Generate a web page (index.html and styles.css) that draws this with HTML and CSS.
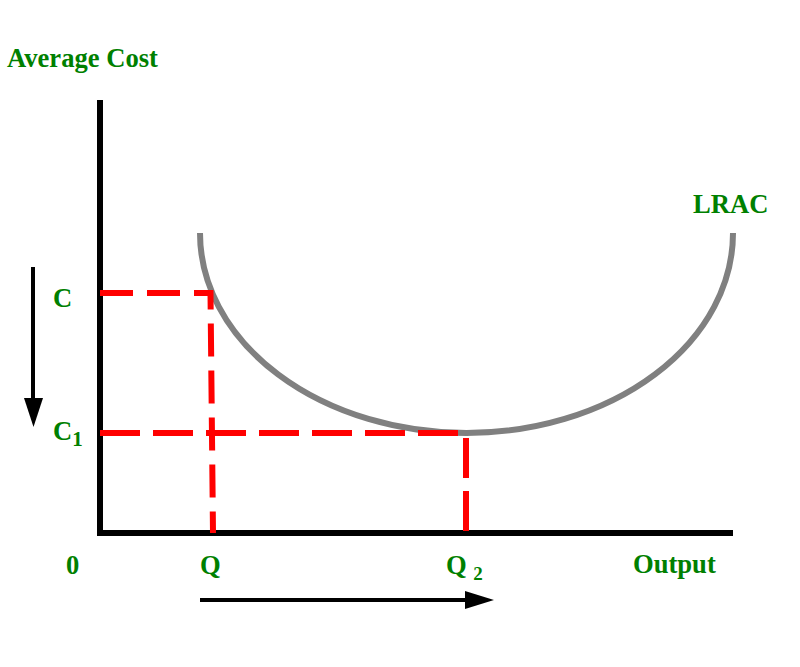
FILE: index.html
```html
<!DOCTYPE html>
<html lang="en">
<head>
<meta charset="utf-8">
<title>Long Run Average Cost</title>
<link rel="stylesheet" href="styles.css">
</head>
<body>
<main class="chart">
  <svg class="chart-svg" width="800" height="667" viewBox="0 0 800 667" xmlns="http://www.w3.org/2000/svg">
    <!-- LRAC curve -->
    <path class="curve" d="M200,233 A266.5,200 0 0 0 733,233"/>
    <!-- axes -->
    <path class="axis" d="M100,100 L100,533 L733,533"/>
    <!-- dashed guides -->
    <path class="guide guide-c" d="M100,293 L210.5,293 L213,533"/>
    <path class="guide guide-c1" d="M100,433 L466,433 L466,533"/>
    <!-- arrows -->
    <line class="arrow-line" x1="33" y1="267" x2="33" y2="400"/>
    <polygon class="arrow-head" points="24,398 43,398 33.5,427"/>
    <line class="arrow-line" x1="200" y1="600" x2="467" y2="600"/>
    <polygon class="arrow-head" points="465,591 465,609 494,600"/>
    <!-- labels -->
    <text class="label" x="7" y="67">Average Cost</text>
    <text class="label" x="693" y="213">LRAC</text>
    <text class="label" x="53" y="307">C</text>
    <text class="label" x="53" y="440">C<tspan class="sub-1" dy="6">1</tspan></text>
    <text class="label" x="66" y="574">0</text>
    <text class="label" x="200" y="574">Q</text>
    <text class="label" x="446" y="574">Q <tspan class="sub-2" dy="6">2</tspan></text>
    <text class="label" x="633" y="573">Output</text>
  </svg>
</main>
</body>
</html>
```
FILE: styles.css
```css
html, body {
  margin: 0;
  padding: 0;
  background: #ffffff;
}

.chart {
  width: 800px;
  height: 667px;
  overflow: hidden;
}

.chart-svg {
  display: block;
}

.curve {
  fill: none;
  stroke: #808080;
  stroke-width: 6;
}

.axis {
  fill: none;
  stroke: #000000;
  stroke-width: 6;
  stroke-linejoin: miter;
}

.guide {
  fill: none;
  stroke: #ff0000;
  stroke-width: 6;
}

.guide-c {
  stroke-dasharray: 33 14;
}

.guide-c1 {
  stroke-dasharray: 40 13;
}

.arrow-line {
  stroke: #000000;
  stroke-width: 4;
}

.arrow-head {
  fill: #000000;
}

.label {
  font-family: "Liberation Serif", "Times New Roman", serif;
  font-weight: bold;
  font-size: 26.6px;
  fill: #008000;
}

.sub-1 {
  font-size: 21px;
}

.sub-2 {
  font-size: 19px;
}
```
